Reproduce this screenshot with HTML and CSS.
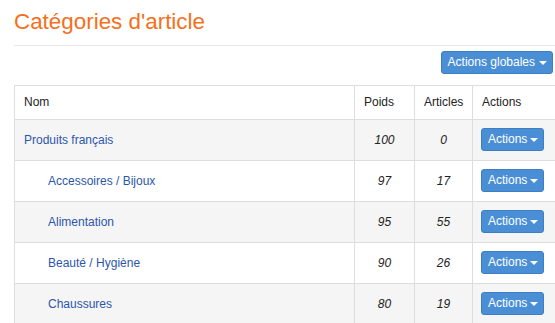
FILE: index.html
```html
<!DOCTYPE html>
<html lang="fr">
<head>
<meta charset="utf-8">
<link rel="stylesheet" href="styles.css">
</head>
<body>
<div class="page">
  <h1 class="title">Catégories d'article</h1>
  <hr class="rule">
  <div class="toolbar">
    <button class="btn btn-global">Actions globales <span class="caret"></span></button>
  </div>
  <table class="grid">
    <colgroup>
      <col class="c-nom"><col class="c-poids"><col class="c-art"><col class="c-act">
    </colgroup>
    <thead>
      <tr><th>Nom</th><th>Poids</th><th>Articles</th><th>Actions</th></tr>
    </thead>
    <tbody>
      <tr class="odd"><td><a href="#" class="link">Produits français</a></td><td class="num">100</td><td class="num">0</td><td class="act"><button class="btn">Actions <span class="caret"></span></button></td></tr>
      <tr><td class="child"><a href="#" class="link">Accessoires / Bijoux</a></td><td class="num">97</td><td class="num">17</td><td class="act"><button class="btn">Actions <span class="caret"></span></button></td></tr>
      <tr class="odd"><td class="child"><a href="#" class="link">Alimentation</a></td><td class="num">95</td><td class="num">55</td><td class="act"><button class="btn">Actions <span class="caret"></span></button></td></tr>
      <tr><td class="child"><a href="#" class="link">Beauté / Hygiène</a></td><td class="num">90</td><td class="num">26</td><td class="act"><button class="btn">Actions <span class="caret"></span></button></td></tr>
      <tr class="odd"><td class="child"><a href="#" class="link">Chaussures</a></td><td class="num">80</td><td class="num">19</td><td class="act"><button class="btn">Actions <span class="caret"></span></button></td></tr>
    </tbody>
  </table>
</div>
</body>
</html>
```

FILE: styles.css
```css
html, body {
  margin: 0;
  padding: 0;
  background: #fff;
}
body {
  font-family: "Liberation Sans", Arial, sans-serif;
  font-size: 12px;
  color: #222;
  overflow: hidden;
}
.page {
  padding: 10px 0 0 14px;
}
.title {
  margin: 0;
  font-size: 22.4px;
  line-height: 24px;
  font-weight: normal;
  color: #f4701c;
}
.rule {
  margin: 11px 0 0 0;
  border: 0;
  border-top: 1px solid #e8e8e8;
  height: 0;
}
.toolbar {
  display: flex;
  justify-content: flex-end;
  padding-right: 2px;
  margin-top: 5px;
}
.btn {
  font-family: "Liberation Sans", Arial, sans-serif;
  font-size: 12px;
  line-height: 15px;
  color: #fff;
  background: #4a8fd6;
  border: 1px solid #3d7fc4;
  border-radius: 3px;
  padding: 3px 5px 3px 6px;
  height: 23px;
  display: inline-flex;
  align-items: center;
  gap: 3px;
  cursor: pointer;
}
.btn-global {
  padding: 3px 5px 3px 6px;
  gap: 4px;
}
.caret {
  display: inline-block;
  width: 0;
  height: 0;
  border-left: 4px solid transparent;
  border-right: 4px solid transparent;
  border-top: 4px solid #fff;
}
.grid {
  margin-top: 11px;
  border-collapse: collapse;
  table-layout: fixed;
  width: 542px;
}
.c-nom { width: 340px; }
.c-poids { width: 60px; }
.c-art { width: 58px; }
.c-act { width: 84px; }
.grid th, .grid td {
  border: 1px solid #dddddd;
  padding: 0 9px;
  vertical-align: middle;
  text-align: left;
}
.grid th {
  height: 32px;
  font-weight: normal;
  color: #222;
  padding-bottom: 1px;
}
.grid td {
  height: 39px;
  padding-bottom: 1px;
}
.odd td {
  background: #f5f5f5;
}
.grid td.child {
  padding-left: 33px;
}
.grid td.num {
  text-align: center;
  font-style: italic;
  padding: 0 0 1px 0;
}
.grid td.act {
  padding: 0 8px 1px 8px;
}
.link {
  color: #2c56ab;
  text-decoration: none;
}
```
